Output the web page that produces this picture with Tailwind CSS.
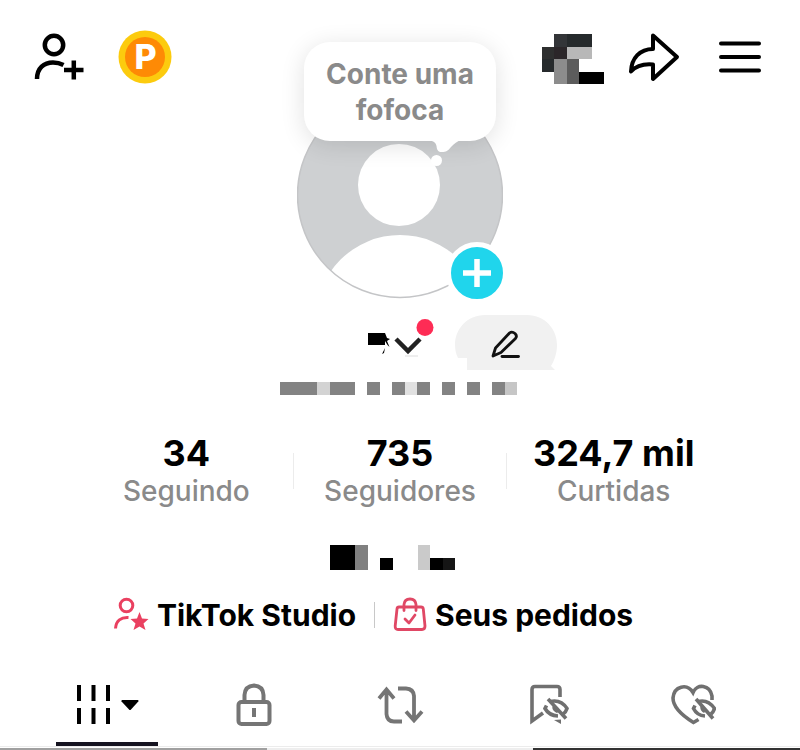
<!DOCTYPE html>
<html lang="pt-BR">
<head>
  <meta charset="UTF-8" />
  <meta name="viewport" content="width=device-width, initial-scale=1.0" />
  <title>Perfil</title>
  <script src="https://cdn.jsdelivr.net/npm/@tailwindcss/browser@4"></script>
</head>
<body class="bg-white text-black font-['Inter','Liberation_Sans',sans-serif]">
  <!-- Topo -->
  <header class="grid grid-cols-[1fr_206px_1fr] px-[34px]">
    <div class="flex items-center gap-8 h-14 mt-[29px]">
      <button aria-label="Adicionar amigos">
        <svg class="w-[52px] h-[54px]" viewBox="2 0 52 54" fill="none" stroke="#000" stroke-width="4.500">
          <circle cx="22" cy="15" r="9.200" />
          <path d="M5 49C5 38 12 32.500 21 32.500C25 32.500 28 33.200 31.500 35" />
          <path d="M32 40H51.500M41.800 30.500V49.500" />
        </svg>
      </button>
      <button aria-label="Moedas">
        <svg class="w-[54px] h-[54px]" viewBox="0 0 54 54">
          <circle cx="27" cy="27" r="26.500" fill="#fccb0e" />
          <circle cx="27" cy="27" r="20" fill="#fe8a05" />
          <text x="27.500" y="39" text-anchor="middle" font-size="34" font-weight="800" fill="#fff">P</text>
        </svg>
      </button>
    </div>

    <!-- Foto de perfil -->
    <div class="relative mt-[92px]">
      <svg class="w-[206px] h-[207px]" viewBox="0 0 206 207">
        <clipPath id="circulo"><circle cx="103" cy="103" r="102.500" /></clipPath>
        <circle cx="103" cy="103" r="102.500" fill="#ced0d2" />
        <circle cx="102" cy="93" r="41" fill="#fff" />
        <ellipse cx="103" cy="227" rx="84" ry="84" fill="#fff" clip-path="url(#circulo)" />
        <circle cx="103" cy="103" r="102.500" fill="none" stroke="#c4c5c7" stroke-width="1.500" />
      </svg>
      <div class="absolute -top-[50px] left-[7px] w-[192px] pt-[14px] pb-[13px] rounded-[26px] bg-white text-center text-[28px] leading-9 font-bold text-[#8a8a8a] shadow-[0_4px_24px_rgba(0,0,0,0.12)]">
        Conte uma fofoca
        <svg class="absolute top-[98px] left-[124px] w-9 h-7" viewBox="0 0 36 28" fill="#fff">
          <path d="M0 0H34C29 1 26 4 23 7C20 11 18 12 14 12C10 12 9 10 8.500 6C8 3 6 1 0 0Z" />
          <circle cx="8.500" cy="20.500" r="5.500" />
        </svg>
      </div>
      <button aria-label="Criar story" class="absolute left-[149px] top-[150px] w-[62px] h-[62px] rounded-full border-[5px] border-white bg-[#20d5ec]">
        <svg class="w-full h-full" viewBox="0 0 52 52" stroke="#fff" stroke-width="5.500"><path d="M12 26H40M26 12V40" /></svg>
      </button>
    </div>

    <div class="flex items-center justify-end h-14 mt-[29px]">
      <svg class="w-[62px] h-[50px] mr-6 mt-1" viewBox="0 0 5 4" preserveAspectRatio="none" shape-rendering="crispEdges">
        <path fill="#333538" d="M1 0h1v1h-1z" />
        <path fill="#262a2c" d="M2 0h2v1h-2zM0 2h1v1h-1z" />
        <path fill="#2e2f2f" d="M0 1h1v1h-1z" />
        <path fill="#2b2629" d="M1 1h1v1h-1z" />
        <path fill="#b8b8b8" d="M2 1h2v1h-2z" />
        <path fill="#8c8c8c" d="M1 2h1v2h-1z" />
        <path fill="#5c5c5c" d="M2 2h1v2h-1z" />
        <path fill="#000" d="M3 3h2v1h-2z" />
      </svg>
      <button aria-label="Compartilhar" class="mr-[38px]">
        <svg class="w-[52px] h-[50px]" viewBox="0 0 52 50" fill="none" stroke="#000" stroke-width="4" stroke-linejoin="round">
          <path d="M25 3.500L49 25L25 47V32.500C14 31.500 8 34 3 39.500C3.500 26 12 17 25 17Z" />
        </svg>
      </button>
      <button aria-label="Menu">
        <svg class="w-12 h-8" viewBox="0 0 48 32" stroke="#000" stroke-width="4" stroke-linecap="round">
          <path d="M3 2.500H41M3 16H41M3 29.500H41" />
        </svg>
      </button>
    </div>
  </header>

  <main>
    <!-- Nome e editar -->
    <div class="flex justify-center mt-4 pl-[124px]">
      <button aria-label="Trocar de conta" class="mr-5">
        <svg class="w-[68px] h-[55px]" viewBox="0 0 68 55">
          <path d="M1 18H18L20 23L23 24L20 26L22.500 32L20.500 30L18 26V30H1ZM18 33L15 39L17 38Z" />
          <path d="M29 24L41 36L53 24" fill="none" stroke="#222" stroke-width="4.500" />
          <path d="M38 41H51" stroke="#ddd" />
          <circle cx="58" cy="12.500" r="8.500" fill="#fe2c55" />
        </svg>
      </button>
      <button aria-label="Editar perfil">
        <svg class="w-[102px] h-[55px]" viewBox="0 0 102 55">
          <path d="M30 0H72C90 0 102 14 102 30C102 39 99 46 96 51L100 55H12V43H3C1 39 0 35 0 30C0 14 12 0 30 0Z" fill="#f1f1f1" />
          <g fill="none" stroke="#111" stroke-width="2.800" stroke-linejoin="round" stroke-linecap="round">
            <path d="M38 41L40.500 33L54.500 18Q57 16 60 18.500Q62.500 21 60.500 23.500L46 37.500Z" />
            <path d="M47 41.500H63.500" />
          </g>
        </svg>
      </button>
    </div>
    <div class="flex justify-center mt-3 pr-1">
      <svg class="w-[237px] h-[13px]" viewBox="0 0 19 1" preserveAspectRatio="none" shape-rendering="crispEdges">
        <path fill="#838383" d="M0 0h3v1h-3zM4 0h2v1h-2zM7 0h1v1h-1zM9 0h1v1h-1zM11 0h1v1h-1zM13 0h1v1h-1zM15 0h1v1h-1zM17 0h1v1h-1z" />
        <path fill="#d3d3d3" d="M3 0h1v1h-1z" />
        <path fill="#e1e1e1" d="M10 0h1v1h-1z" />
        <path fill="#c6c6c6" d="M18 0h1v1h-1z" />
      </svg>
    </div>

    <!-- Números -->
    <div class="flex items-center justify-center mt-[38px] px-20 text-center">
      <a href="#" class="flex-1">
        <div class="text-[36px] leading-10 font-bold whitespace-nowrap">34</div>
        <div class="text-[28px] leading-9 font-medium text-[#8a8a8a]">Seguindo</div>
      </a>
      <span class="w-px h-9 bg-[#ececec]"></span>
      <a href="#" class="flex-1">
        <div class="text-[36px] leading-10 font-bold whitespace-nowrap">735</div>
        <div class="text-[28px] leading-9 font-medium text-[#8a8a8a]">Seguidores</div>
      </a>
      <span class="w-px h-9 bg-[#ececec]"></span>
      <a href="#" class="flex-1">
        <div class="text-[36px] leading-10 font-bold whitespace-nowrap">324,7 mil</div>
        <div class="text-[28px] leading-9 font-medium text-[#8a8a8a]">Curtidas</div>
      </a>
    </div>

    <div class="flex justify-center mt-9 pr-4">
      <svg class="w-[125px] h-[25px]" viewBox="0 0 10 2" preserveAspectRatio="none" shape-rendering="crispEdges">
        <path fill="#000" d="M0 0h2v2h-2zM4 1h1v1h-1zM8 1h1v1h-1z" />
        <path fill="#808080" d="M2 0h1v2h-1z" />
        <path fill="#cacaca" d="M7 0h1v2h-1z" />
        <path fill="#151515" d="M9 1h1v1h-1z" />
      </svg>
    </div>

    <!-- Atalhos -->
    <div class="flex items-center justify-center mt-[27px] pr-[54px] text-[30px] leading-9 font-bold whitespace-nowrap">
      <a href="#" class="flex items-center gap-2">
        <svg class="w-9 h-9" viewBox="0 0 36 36" fill="none" stroke="#ea4060" stroke-width="3">
          <circle cx="13.500" cy="8.500" r="6.300" />
          <path d="M2.500 31.500C3 23.500 8 20 15.500 20.500" />
          <path d="M26.500 15L29 21.500L35.500 22L30.500 26.500L32.500 33L26.500 29.500L20.500 33L22.500 26.500L17.500 22L24 21.500Z" fill="#ea4060" stroke="none" />
        </svg>
        TikTok Studio
      </a>
      <span class="w-px h-[26px] mx-[18px] bg-[#c8c8c8]"></span>
      <a href="#" class="flex items-center gap-2">
        <svg class="w-[34px] h-9" viewBox="0 0 34 36" fill="none" stroke="#e04865" stroke-width="2.800" stroke-linecap="round" stroke-linejoin="round">
          <path d="M6 10H28Q30 10 30.300 12L32 29Q32 32.500 29 32.500H5Q2 32.500 2.200 29L4 12Q4.200 10 6 10Z" />
          <path d="M11 13.500V7.500Q11.500 2 17 2Q22.500 2 23 7.500V13.500" />
          <path d="M12 22L16 26L22 18" />
        </svg>
        Seus pedidos
      </a>
    </div>

    <!-- Abas -->
    <nav class="grid grid-cols-5 h-[84px] mt-[30px] px-[34px] border-b border-[#ececec]">
      <button aria-label="Vídeos" class="relative flex items-center justify-center">
        <svg class="w-16 h-11" viewBox="0 0 64 44">
          <path d="M4 2V18M18.500 2V18M33 2V18M4 25V41M18.500 25V41M33 25V41" stroke="#000" stroke-width="4" />
          <path d="M47 17H63Q64 17.500 63.300 18.500L56 26.500Q55 27.500 54 26.500L46.500 18.500Q46 17.500 47 17Z" />
        </svg>
        <span class="absolute bottom-0 w-[102px] h-1 bg-[#151320]"></span>
      </button>
      <button aria-label="Privados" class="flex items-center justify-center">
        <svg class="w-9 h-11" viewBox="0 0 36 44" fill="none" stroke="#757575" stroke-width="4">
          <rect x="2.500" y="19" width="31" height="22" rx="3" />
          <path d="M8.500 19V12Q9 3 18 2.500Q27 3 27.500 12V19M18 25V34" />
        </svg>
      </button>
      <button aria-label="Republicações" class="flex items-center justify-center">
        <svg class="w-12 h-11" viewBox="0 0 48 44" fill="none" stroke="#757575" stroke-width="3.800">
          <path d="M3 15.500L10.500 6.500L18 15.500M10.500 7V31Q11 38.500 18 38.500H26" />
          <path d="M22 5.500H30Q37.500 6 38 13V38M30 28.500L38 37.500L46 28.500" />
        </svg>
      </button>
      <button aria-label="Favoritos" class="flex items-center justify-center pl-[6px]">
        <svg class="w-10 h-11" viewBox="0 0 40 44" fill="none" stroke="#707070" stroke-width="3.600">
          <path d="M31 14V6.500Q31 3.500 28 3.500H6Q3 3.500 3 6.500V38L14 30" />
          <path d="M25 37L32 41V36.500Z" fill="#707070" stroke="none" />
          <path d="M21 18.500Q32 16 38 25.500Q37 29 34 31M17.500 22.500L16 25.500Q20 32.500 29 33M25 23.500Q25 27 29 28.500" />
          <path d="M19 16L37 35.500" />
        </svg>
      </button>
      <button aria-label="Curtidos" class="flex items-center justify-center">
        <svg class="w-[46px] h-11" viewBox="0 0 46 44" fill="none" stroke="#707070" stroke-width="3.600">
          <path d="M42 17V13C40 2 27 0 23 9.500C17 0 4 3 3 15C3 25 13 33 23.500 39.500L28.500 36.500" />
          <path d="M28 18.500Q38 16 44.500 25.500Q43.500 29 41 31M25 22.500L23.500 25.500Q27 32.500 35 33M32 23.500Q32 27 35 28.500" />
          <path d="M26 16L43 35.500" />
        </svg>
      </button>
    </nav>

    <!-- Início da grade de vídeos -->
    <div class="grid grid-cols-3 mt-px h-[2px]">
      <div class="bg-[#a0a0a0]"></div>
      <div class="bg-[#eeeeee]"></div>
      <div class="bg-[#333333]"></div>
    </div>
  </main>
</body>
</html>
